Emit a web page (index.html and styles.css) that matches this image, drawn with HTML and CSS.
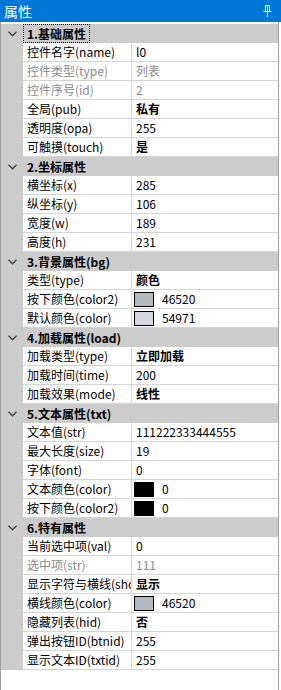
FILE: index.html
```html
<!DOCTYPE html>
<html lang="zh">
<head>
    <meta charset="UTF-8">
    <title>属性</title>
    <link rel="stylesheet" href="styles.css">
</head>
<body>
    <div class="panel">
        <div class="title-bar">
            <span class="title">属性</span>
            <svg class="pin" width="9" height="12" viewBox="0 0 9 12">
                <path d="M2 0.5h5M2.5 1v5M6.5 1v5M4.5 1v5M0.5 6.5h8M4.5 7v5" stroke="#fff" stroke-width="1" fill="none"/>
            </svg>
        </div>
        <div class="grid">
            <div class="cat"><span class="chev"><svg width="9" height="6" viewBox="0 0 9 6"><path d="M0.5 0.8L4.5 4.8L8.5 0.8" stroke="#404040" stroke-width="1.3" fill="none"/></svg></span><span class="cat-label focus">1.基础属性</span></div>
            <div class="row"><span class="gutter"></span><span class="name">控件名字(name)</span><span class="value">l0</span></div>
            <div class="row off"><span class="gutter"></span><span class="name">控件类型(type)</span><span class="value">列表</span></div>
            <div class="row off"><span class="gutter"></span><span class="name">控件序号(id)</span><span class="value">2</span></div>
            <div class="row"><span class="gutter"></span><span class="name">全局(pub)</span><span class="value bold">私有</span></div>
            <div class="row"><span class="gutter"></span><span class="name">透明度(opa)</span><span class="value">255</span></div>
            <div class="row"><span class="gutter"></span><span class="name">可触摸(touch)</span><span class="value bold">是</span></div>

            <div class="cat"><span class="chev"><svg width="9" height="6" viewBox="0 0 9 6"><path d="M0.5 0.8L4.5 4.8L8.5 0.8" stroke="#404040" stroke-width="1.3" fill="none"/></svg></span><span class="cat-label">2.坐标属性</span></div>
            <div class="row"><span class="gutter"></span><span class="name">横坐标(x)</span><span class="value">285</span></div>
            <div class="row"><span class="gutter"></span><span class="name">纵坐标(y)</span><span class="value">106</span></div>
            <div class="row"><span class="gutter"></span><span class="name">宽度(w)</span><span class="value">189</span></div>
            <div class="row"><span class="gutter"></span><span class="name">高度(h)</span><span class="value">231</span></div>

            <div class="cat"><span class="chev"><svg width="9" height="6" viewBox="0 0 9 6"><path d="M0.5 0.8L4.5 4.8L8.5 0.8" stroke="#404040" stroke-width="1.3" fill="none"/></svg></span><span class="cat-label">3.背景属性(bg)</span></div>
            <div class="row"><span class="gutter"></span><span class="name">类型(type)</span><span class="value bold">颜色</span></div>
            <div class="row"><span class="gutter"></span><span class="name">按下颜色(color2)</span><span class="value"><i class="swatch" style="background:#b5b9c4"></i>46520</span></div>
            <div class="row"><span class="gutter"></span><span class="name">默认颜色(color)</span><span class="value"><i class="swatch" style="background:#d5d8de"></i>54971</span></div>

            <div class="cat"><span class="chev"><svg width="9" height="6" viewBox="0 0 9 6"><path d="M0.5 0.8L4.5 4.8L8.5 0.8" stroke="#404040" stroke-width="1.3" fill="none"/></svg></span><span class="cat-label">4.加载属性(load)</span></div>
            <div class="row"><span class="gutter"></span><span class="name">加载类型(type)</span><span class="value bold">立即加载</span></div>
            <div class="row"><span class="gutter"></span><span class="name">加载时间(time)</span><span class="value">200</span></div>
            <div class="row"><span class="gutter"></span><span class="name">加载效果(mode)</span><span class="value bold">线性</span></div>

            <div class="cat"><span class="chev"><svg width="9" height="6" viewBox="0 0 9 6"><path d="M0.5 0.8L4.5 4.8L8.5 0.8" stroke="#404040" stroke-width="1.3" fill="none"/></svg></span><span class="cat-label">5.文本属性(txt)</span></div>
            <div class="row"><span class="gutter"></span><span class="name">文本值(str)</span><span class="value">111222333444555</span></div>
            <div class="row"><span class="gutter"></span><span class="name">最大长度(size)</span><span class="value">19</span></div>
            <div class="row"><span class="gutter"></span><span class="name">字体(font)</span><span class="value">0</span></div>
            <div class="row"><span class="gutter"></span><span class="name">文本颜色(color)</span><span class="value"><i class="swatch" style="background:#000"></i>0</span></div>
            <div class="row"><span class="gutter"></span><span class="name">按下颜色(color2)</span><span class="value"><i class="swatch" style="background:#000"></i>0</span></div>

            <div class="cat"><span class="chev"><svg width="9" height="6" viewBox="0 0 9 6"><path d="M0.5 0.8L4.5 4.8L8.5 0.8" stroke="#404040" stroke-width="1.3" fill="none"/></svg></span><span class="cat-label">6.特有属性</span></div>
            <div class="row"><span class="gutter"></span><span class="name">当前选中项(val)</span><span class="value">0</span></div>
            <div class="row off"><span class="gutter"></span><span class="name">选中项(str)</span><span class="value">111</span></div>
            <div class="row"><span class="gutter"></span><span class="name">显示字符与横线(show)</span><span class="value bold">显示</span></div>
            <div class="row"><span class="gutter"></span><span class="name">横线颜色(color)</span><span class="value"><i class="swatch" style="background:#b5b9c4"></i>46520</span></div>
            <div class="row"><span class="gutter"></span><span class="name">隐藏列表(hid)</span><span class="value bold">否</span></div>
            <div class="row"><span class="gutter"></span><span class="name">弹出按钮ID(btnid)</span><span class="value">255</span></div>
            <div class="row"><span class="gutter"></span><span class="name">显示文本ID(txtid)</span><span class="value">255</span></div>
        </div>
    </div>
</body>
</html>
```

FILE: styles.css
```css
body {
    margin: 0;
    width: 281px;
    height: 690px;
    overflow: hidden;
    background-color: #fff;
    font-family: "Noto Sans CJK SC", sans-serif;
    font-size: 12px;
    color: #000;
}
.panel {
    display: flex;
    flex-direction: column;
    height: 690px;
}
.title-bar {
    height: 22px;
    background-color: #0078d7;
    display: flex;
    align-items: center;
    justify-content: space-between;
    padding: 0 9px 0 4px;
    flex-shrink: 0;
}
.title {
    color: #fff;
    font-size: 14px;
    line-height: 22px;
}
.pin {
    display: block;
}
.grid {
    flex: 1;
    width: 277px;
    border-left: 1px solid #a0a0a0;
    border-right: 1px solid #a0a0a0;
    padding-top: 2px;
    box-sizing: border-box;
    width: 279px;
}
.cat {
    height: 19px;
    display: flex;
    align-items: center;
    background-color: #cccccc;
}
.chev {
    width: 22px;
    display: flex;
    justify-content: center;
}
.chev svg {
    display: block;
    margin-left: 1px;
}
.cat-label {
    font-weight: bold;
    line-height: 17px;
    padding: 0 3px;
    border: 1px dotted transparent;
}
.cat-label.focus {
    border-color: #000;
}
.row {
    height: 19px;
    display: flex;
    line-height: 18px;
}
.gutter {
    width: 22px;
    flex-shrink: 0;
    background-color: #cccccc;
}
.name {
    width: 104px;
    flex-shrink: 0;
    padding-left: 4px;
    border-right: 1px solid #d4d4d4;
    border-bottom: 1px solid #d4d4d4;
    white-space: nowrap;
    overflow: hidden;
}
.value {
    flex: 1;
    padding-left: 4px;
    border-bottom: 1px solid #d4d4d4;
    display: flex;
    align-items: center;
    white-space: nowrap;
}
.value.bold {
    font-weight: bold;
}
.off .name,
.off .value {
    color: #8c8c8c;
}
.swatch {
    width: 18px;
    height: 13px;
    border: 1px solid #000;
    margin: 0 8px 0 -2px;
}
```
